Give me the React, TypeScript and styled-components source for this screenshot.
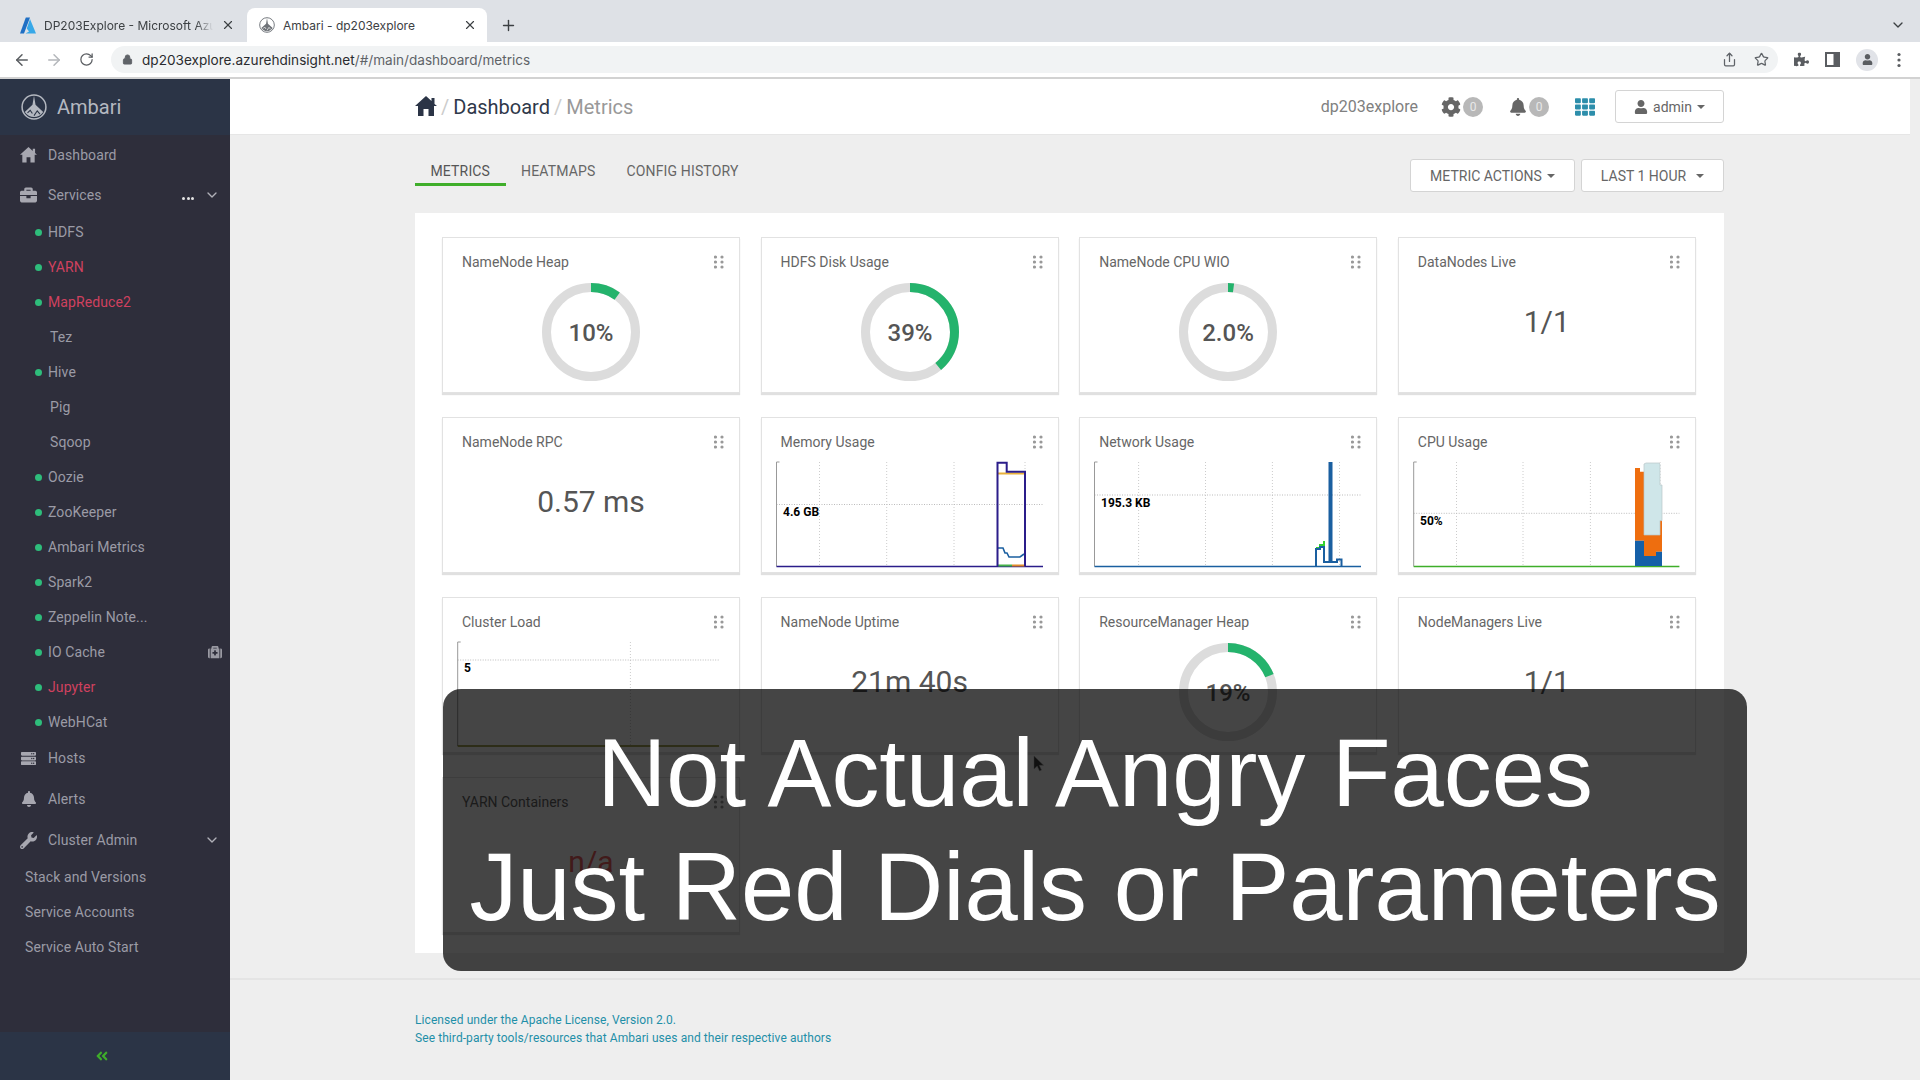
import React from "react";
import styled, { createGlobalStyle } from "styled-components";
import { ArrowLeft, ArrowRight, RotateCw, Lock, Share, Star, ChevronDown, Plus, X } from "lucide-react";
import {
  FaBriefcase, FaServer, FaBell, FaWrench, FaCog, FaUser, FaTh, FaAngleDoubleLeft, FaMedkit, FaPuzzlePiece,
} from "react-icons/fa";

const Global = createGlobalStyle`
  html, body { margin: 0; padding: 0; background: #eee; }
  * { box-sizing: border-box; }
  body { font-family: Roboto, "Liberation Sans", sans-serif; }
`;

const Page = styled.div`
  position: relative; width: 1920px; height: 1080px; overflow: hidden;
  display: flex; flex-direction: column; background: #eee;
`;

/* ---------- browser chrome ---------- */
const TabStrip = styled.div`
  height: 42px; background: #dee1e6; display: flex; align-items: flex-end;
  font-family: Inter, "Liberation Sans", sans-serif; font-size: 12px; color: #3c4043;
`;
const Tab = styled.div<{ $active?: boolean; $w: number }>`
  width: ${(p) => p.$w}px; height: 34px; display: flex; align-items: center;
  padding: 0 10px 0 ${(p) => (p.$active ? 12 : 20)}px; gap: 8px;
  border-radius: 8px 8px 0 0; background: ${(p) => (p.$active ? "#fff" : "transparent")};
  margin-right: ${(p) => (p.$active ? 0 : 2)}px;
`;
const TabTitle = styled.span<{ $fade?: boolean }>`
  flex: 1; white-space: nowrap; overflow: hidden;
  ${(p) => p.$fade && "mask-image: linear-gradient(90deg,#000 90%,transparent);"}
`;
const PlusBox = styled.div`
  width: 42px; height: 34px; display: flex; align-items: center; justify-content: center; color: #3c4043;
`;
const StripEnd = styled.div`
  margin-left: auto; width: 44px; height: 34px; display: flex; align-items: center; justify-content: center; color: #3c4043;
`;
const Toolbar = styled.div`
  height: 37px; background: #fff; border-bottom: 2px solid #d2d2d2; display: flex; align-items: center; color: #5f6368;
`;
const NavBtn = styled.div<{ $dim?: boolean }>`
  width: 32px; height: 26px; display: flex; align-items: center; justify-content: center;
  color: ${(p) => (p.$dim ? "#b4b7bb" : "#5a5d61")};
  &:first-child { margin-left: 6px; }
`;
const AddressBar = styled.div`
  width: 1667px; height: 27px; margin-left: 9px; border-radius: 14px; background: #f1f3f4;
  display: flex; align-items: center; padding: 0 0 0 11px; gap: 9px;
  font-family: Inter, "Liberation Sans", sans-serif; font-size: 13.6px; color: #5f6368;
`;
const Host = styled.span`color: #2a2b2e;`;
const UrlEnd = styled.div`margin-left: auto; display: flex; align-items: center; gap: 17px; padding-right: 9px;`;
const ToolIcons = styled.div`display: flex; align-items: center; margin-left: 16px; gap: 16px; color: #5a5d61;`;
const Avatar = styled.div`
  width: 22px; height: 22px; border-radius: 50%; background: #e1e3e8; display: flex; align-items: center; justify-content: center; color: #5a5d61;
`;
const KebabSvg = styled.svg`margin-left: 3px;`;

/* ---------- app frame ---------- */
const Body = styled.div`flex: 1; display: flex; min-height: 0;`;
const Sidebar = styled.aside`
  width: 230px; flex: none; background: #2e2e3b; display: flex; flex-direction: column; color: #9b9ba6; font-size: 14px; letter-spacing: .1px;
`;
const Brand = styled.div`
  height: 56px; background: #2b3446; display: flex; align-items: center; gap: 10px; padding-left: 21px; font-size: 20px; color: #b4b8c0; letter-spacing: 0;
`;
const NavItem = styled.div<{ $h: number }>`
  height: ${(p) => p.$h}px; display: flex; align-items: center; padding: 0 10px 0 20px; gap: 11px;
`;
const NavIcon = styled.span`width: 17px; display: flex; justify-content: center; color: #a7a7b0;`;
const NavRight = styled.span`margin-left: auto; display: flex; align-items: center; gap: 10px; color: #b0b0b8;`;
const SubItem = styled.div<{ $red?: boolean; $x?: number }>`
  height: 35px; display: flex; align-items: center; padding-left: ${(p) => p.$x ?? 48}px; padding-right: 8px; position: relative;
  color: ${(p) => (p.$red ? "#d0415f" : "#9b9ba6")};
`;
const Dot = styled.span`
  position: absolute; left: 35px; top: 15px; width: 7px; height: 7px; border-radius: 50%; background: #2ebd7b;
`;
const SubBadge = styled.span`margin-left: auto; color: #9a9aa3; display: flex;`;
const Ellipsis = styled.span`display: flex; gap: 1.5px; position: relative; top: 4px;`;
const EllipsisDot = styled.i`width: 3px; height: 3px; background: #e4e4e4; border-radius: 50%;`;
const SideFoot = styled.div`
  margin-top: auto; height: 48px; background: #2b3446; display: flex; align-items: center; padding-left: 95px; color: #3fae2a;
`;
const Main = styled.main`flex: 1; min-width: 0; display: flex; flex-direction: column;`;
const Header = styled.header`
  height: 56px; margin-right: 10px; background: #fff; border-bottom: 1px solid #e6e6e6;
  display: flex; align-items: center; padding: 0 186px 0 185px;
`;
const Crumbs = styled.div`display: flex; align-items: center; font-size: 20px; color: #2f384a; gap: 4px;`;
const Slash = styled.span`color: #ccc;`;
const Muted = styled.span`color: #999;`;
const HeadRight = styled.div`margin-left: auto; display: flex; align-items: center;`;
const ClusterName = styled.span`font-size: 16px; color: #808080; margin-right: 23px;`;
const Alert = styled.div`display: flex; align-items: center; color: #666; gap: 2px; margin-right: 26px;`;
const Count = styled.span`
  width: 20px; height: 20px; border-radius: 50%; background: #b8b8b8; color: #e8e8e8; font-size: 12px;
  display: flex; align-items: center; justify-content: center;
`;
const Grid9 = styled.span`display: flex; color: #2d8eab; margin-right: 20px;`;
const Btn = styled.div<{ $w: number }>`
  width: ${(p) => p.$w}px; height: 33px; background: #fff; border: 1px solid #d4d4d4; border-radius: 3px;
  display: flex; align-items: center; justify-content: center; color: #666; font-size: 14px; gap: 5px;
`;
const Caret = styled.i<{ $gap?: number }>`
  width: 0; height: 0; border-left: 4px solid transparent; border-right: 4px solid transparent; border-top: 4px solid #666;
  margin-left: ${(p) => p.$gap ?? 0}px;
`;
const Bar = styled.div`
  display: flex; align-items: flex-start; justify-content: space-between; padding: 24px 196px 0 185px; height: 78px; flex: none;
`;
const Tabs = styled.div`display: flex;`;
const TabLink = styled.div<{ $active?: boolean }>`
  height: 27px; padding: 0 15.5px; line-height: 24px; font-size: 14px; letter-spacing: .15px; color: ${(p) => (p.$active ? "#555" : "#666")};
  border-bottom: 3px solid ${(p) => (p.$active ? "#3fae2a" : "transparent")};
`;
const Actions = styled.div`display: flex; gap: 6px;`;
const Panel = styled.section`
  width: 1309px; height: 740px; flex: none; margin-left: 185px; background: #fff; padding: 24px 0 0 27px;
`;
const CardGrid = styled.div`
  display: grid; grid-template-columns: repeat(4, 298px); grid-auto-rows: 156px; gap: 24px 20.6px;
`;
const Card = styled.div`
  border: 1px solid #e2e2e2; background: #fff; box-shadow: 0 2px 1px rgba(0,0,0,.12);
`;
const CardHead = styled.div`
  height: 36px; padding: 12px 15px 0 19px; display: flex; align-items: center; justify-content: space-between; font-size: 14px; color: #666;
  line-height: 24px;
`;
const Handle = styled.svg`display: block; flex: none;`;
const GaugeBox = styled.div`display: flex; justify-content: center; margin-top: 8px;`;
const GaugeText = styled.text`font-family: Roboto, sans-serif; font-size: 24px; font-weight: 500; fill: #555;`;
const Value = styled.div<{ $red?: boolean }>`
  margin-top: 28px; height: 40px; line-height: 40px; text-align: center; font-size: 30px;
  color: ${(p) => (p.$red ? "#ef6162" : "#555")};
`;
const ChartSvg = styled.svg`display: block; margin-top: 4px;`;
const ChartLabel = styled.text`font-family: Roboto, sans-serif; font-size: 12px; font-weight: 700; fill: #000;`;
const Foot = styled.footer`
  margin-top: 25px; flex: 1; border-top: 2px solid #e4e4e4; padding: 31px 0 0 185px; font-size: 12px; line-height: 18px; color: #1f8fa8; letter-spacing: .08px;
`;
const Caption = styled.div`
  position: absolute; left: 443px; top: 689px; width: 1304px; height: 282px; border-radius: 18px;
  background: rgba(0,0,0,.73); display: flex; flex-direction: column; align-items: center; justify-content: center;
  color: #fff; font-family: "Liberation Sans", Arial, sans-serif; font-size: 95.8px; line-height: 114px; white-space: nowrap;
`;
const Cursor = styled.svg`position: absolute; left: 1033px; top: 755px;`;

/* ---------- drawn parts ---------- */
const HandleDots = () => (
  <Handle width="10" height="14" viewBox="0 0 10 14" fill="#999">
    {[2, 7, 12].map((y) => [1.5, 8].map((x) => <circle key={`${x}${y}`} cx={x} cy={y} r="1.6" />))}
  </Handle>
);

const HomeGlyph = ({ size, color }: { size: number; color: string }) => (
  <svg width={size} height={size * 0.92} viewBox="0 0 22 20" fill={color}>
    <path d="M11 0L16.5 5V2H19.5V7.8L22 10H19V20H13.5V13H8.5V20H3V10H0Z" />
  </svg>
);

const Gauge = ({ pct, label }: { pct: number; label: string }) => {
  const r = 44.5;
  const c = 2 * Math.PI * r;
  return (
    <GaugeBox>
      <svg width="100" height="100" viewBox="0 0 100 100">
        <circle cx="50" cy="50" r={r} fill="none" stroke="#dcdcdc" strokeWidth="9" />
        <circle cx="50" cy="50" r={r} fill="none" stroke="#24b36c" strokeWidth="9"
          strokeDasharray={`${(c * pct) / 100} ${c}`} transform="rotate(-90 50 50)" />
        <GaugeText x="50" y="58.5" textAnchor="middle">{label}</GaugeText>
      </svg>
    </GaugeBox>
  );
};

const Axes = ({ x0, x1, y0, y1, hy, grid, line = "#1a5fa0" }: { x0: number; x1: number; y0: number; y1: number; hy: number; grid: number[]; line?: string }) => (
  <>
    {grid.map((x) => <line key={x} x1={x} x2={x} y1={y0} y2={y1} stroke="#ccc" strokeDasharray="1 2" />)}
    <line x1={x0} x2={x1} y1={hy} y2={hy} stroke="#bbb" strokeDasharray="1 1.5" />
    <path d={`M${x0 + 3} ${y0}H${x0}V${y1}`} fill="none" stroke="#999" />
    <line x1={x0} x2={x1} y1={y1} y2={y1} stroke={line} strokeWidth="1.6" />
  </>
);

const MemoryChart = () => (
  <ChartSvg width="296" height="115" viewBox="762 458 296 115">
    <Axes x0={776.5} x1={1043} y0={462} y1={566.5} hy={504.5} grid={[819.5, 886.7, 954, 1025]} line="#2b1d8a" />
    <ChartLabel x="783" y="516">4.6 GB</ChartLabel>
    <line x1="998" x2="1025" y1="473.5" y2="473.5" stroke="#e8b13a" strokeWidth="2" />
    <line x1="998" x2="1012" y1="565.5" y2="565.5" stroke="#45b24a" strokeWidth="2" />
    <line x1="1012" x2="1025" y1="565.5" y2="565.5" stroke="#e08a2a" strokeWidth="2" />
    <path d="M998 548H1003L1005 553H1007L1009 557H1020L1024 554" fill="none" stroke="#1a5fa0" strokeWidth="1.6" />
    <path d="M997.5 566.5V462.7H1006.7V471.7H1025V566.5" fill="none" stroke="#2b1d8a" strokeWidth="2" />
  </ChartSvg>
);

const NetworkChart = () => (
  <ChartSvg width="296" height="115" viewBox="1080 458 296 115">
    <Axes x0={1094.5} x1={1361} y0={462} y1={566.5} hy={495} grid={[1138.6, 1205.5, 1272.4, 1339.5]} />
    <ChartLabel x="1101" y="506.5">195.3 KB</ChartLabel>
    <path d="M1316 548H1320V545H1324V541" fill="none" stroke="#35d030" strokeWidth="2" />
    <path d="M1316 566.5V549H1320V547H1324V562H1329M1332 562H1337V559.5H1341.5V566.5" fill="none" stroke="#1a5fa0" strokeWidth="2" />
    <rect x="1328.5" y="462" width="4" height="101" fill="#1a5fa0" />
  </ChartSvg>
);

const CpuChart = () => (
  <ChartSvg width="296" height="115" viewBox="1399 458 296 115">
    <Axes x0={1413.7} x1={1679.4} y0={462} y1={566.5} hy={513.3} grid={[1456.5, 1523, 1590.4, 1660]} line="#3fae2a" />
    <ChartLabel x="1420" y="525">50%</ChartLabel>
    <path d="M1635 468H1640V471.7H1644V535H1660V520.6H1662V551.7H1656V556H1644V540.7H1635Z" fill="#ee6e0f" />
    <path d="M1635 540.7H1644V556H1656V551.7H1662V566H1635Z" fill="#1560a8" />
    <path d="M1644 464L1646 463H1659L1660 464V485H1662V520.6H1660V535H1644Z" fill="#cfe6e9" stroke="#b9c6c8" strokeWidth=".7" />
  </ChartSvg>
);

const LoadChart = () => (
  <ChartSvg width="296" height="115" viewBox="443 638 296 115">
    <Axes x0={457.7} x1={719} y0={642} y1={746} hy={660} grid={[630.4]} line="#8a8a20" />
    <ChartLabel x="464" y="672">5</ChartLabel>
  </ChartSvg>
);

const Widget = ({ title, children }: { title: string; children?: React.ReactNode }) => (
  <Card>
    <CardHead>{title}<HandleDots /></CardHead>
    {children}
  </Card>
);

const AzureLogo = () => (
  <svg width="16" height="17" viewBox="0 0 16 17">
    <path d="M5.8 0.5H10L4 16.5H0Z" fill="#1f6fc4" />
    <path d="M10 2L16 16.5H5.5L9 14.5L6.8 11.5Z" fill="#37a8e8" />
  </svg>
);

const AmbariLogo = ({ size, ring, bg }: { size: number; ring: string; bg: string }) => (
  <svg width={size} height={size} viewBox="0 0 24 24">
    <circle cx="12" cy="12" r="11" fill="none" stroke={ring} strokeWidth="1.4" />
    <path d="M12 1.5L13.4 10L20.5 16.5A10 10 0 0 1 3.5 16.5L10.6 10Z" fill={ring} />
    <path d="M6 17.5L8.5 15L10.5 18M12 20L15 15.5L17.5 18.5" fill="none" stroke={bg} strokeWidth="1" />
  </svg>
);

const SidePanelIcon = () => (
  <svg width="15" height="15" viewBox="0 0 15 15">
    <rect x="1" y="1" width="13" height="13" fill="#fff" stroke="#5a5d61" strokeWidth="2" />
    <rect x="8.5" y="1" width="5.5" height="13" fill="#5a5d61" />
  </svg>
);

const Kebab = () => (
  <KebabSvg width="4" height="16" viewBox="0 0 4 16" fill="#5a5d61">
    <circle cx="2" cy="2.5" r="1.6" /><circle cx="2" cy="8" r="1.6" /><circle cx="2" cy="13.5" r="1.6" />
  </KebabSvg>
);

type Svc = { n: string; dot?: boolean; red?: boolean; badge?: boolean; x?: number };
const services: Svc[] = [
  { n: "HDFS", dot: true }, { n: "YARN", dot: true, red: true }, { n: "MapReduce2", dot: true, red: true },
  { n: "Tez", x: 50 }, { n: "Hive", dot: true }, { n: "Pig", x: 50 }, { n: "Sqoop", x: 50 },
  { n: "Oozie", dot: true }, { n: "ZooKeeper", dot: true }, { n: "Ambari Metrics", dot: true }, { n: "Spark2", dot: true },
  { n: "Zeppelin Note...", dot: true }, { n: "IO Cache", dot: true, badge: true }, { n: "Jupyter", dot: true, red: true }, { n: "WebHCat", dot: true },
];

export default function App() {
  return (
    <Page>
      <Global />
      <TabStrip>
        <Tab $w={245}><AzureLogo /><TabTitle $fade>DP203Explore - Microsoft Azu</TabTitle><X size={14} /></Tab>
        <Tab $active $w={240}><AmbariLogo size={16} ring="#6f7378" bg="#fff" /><TabTitle>Ambari - dp203explore</TabTitle><X size={14} /></Tab>
        <PlusBox><Plus size={17} /></PlusBox>
        <StripEnd><ChevronDown size={16} /></StripEnd>
      </TabStrip>
      <Toolbar>
        <NavBtn><ArrowLeft size={18} /></NavBtn>
        <NavBtn $dim><ArrowRight size={18} /></NavBtn>
        <NavBtn><RotateCw size={15} /></NavBtn>
        <AddressBar>
          <Lock size={11} fill="#5f6368" />
          <span><Host>dp203explore.azurehdinsight.net</Host>/#/main/dashboard/metrics</span>
          <UrlEnd><Share size={15} /><Star size={15} /></UrlEnd>
        </AddressBar>
        <ToolIcons>
          <FaPuzzlePiece size={15} />
          <SidePanelIcon />
          <Avatar><FaUser size={11} /></Avatar>
          <Kebab />
        </ToolIcons>
      </Toolbar>
      <Body>
        <Sidebar>
          <Brand><AmbariLogo size={26} ring="#b4b8c0" bg="#2b3446" />Ambari</Brand>
          <NavItem $h={40}><NavIcon><HomeGlyph size={17} color="#a7a7b0" /></NavIcon>Dashboard</NavItem>
          <NavItem $h={39}><NavIcon><FaBriefcase size={18} /></NavIcon>Services
            <NavRight><Ellipsis><EllipsisDot /><EllipsisDot /><EllipsisDot /></Ellipsis><ChevronDown size={16} /></NavRight>
          </NavItem>
          {services.map((s) => (
            <SubItem key={s.n} $red={s.red} $x={s.x}>
              {s.dot && <Dot />}{s.n}
              {s.badge && <SubBadge><FaMedkit size={14} /></SubBadge>}
            </SubItem>
          ))}
          <NavItem $h={38}><NavIcon><FaServer size={15} /></NavIcon>Hosts</NavItem>
          <NavItem $h={44}><NavIcon><FaBell size={16} /></NavIcon>Alerts</NavItem>
          <NavItem $h={38}><NavIcon><FaWrench size={17} /></NavIcon>Cluster Admin
            <NavRight><ChevronDown size={16} /></NavRight>
          </NavItem>
          <SubItem $x={25}>Stack and Versions</SubItem>
          <SubItem $x={25}>Service Accounts</SubItem>
          <SubItem $x={25}>Service Auto Start</SubItem>
          <SideFoot><FaAngleDoubleLeft size={14} /></SideFoot>
        </Sidebar>
        <Main>
          <Header>
            <Crumbs><HomeGlyph size={22} color="#2b3446" /><Slash>/</Slash>Dashboard<Slash>/</Slash><Muted>Metrics</Muted></Crumbs>
            <HeadRight>
              <ClusterName>dp203explore</ClusterName>
              <Alert><FaCog size={20} /><Count>0</Count></Alert>
              <Alert><FaBell size={18} /><Count>0</Count></Alert>
              <Grid9><FaTh size={20} /></Grid9>
              <Btn $w={109}><FaUser size={14} />admin<Caret /></Btn>
            </HeadRight>
          </Header>
          <Bar>
            <Tabs>
              <TabLink $active>METRICS</TabLink>
              <TabLink>HEATMAPS</TabLink>
              <TabLink>CONFIG HISTORY</TabLink>
            </Tabs>
            <Actions>
              <Btn $w={165}>METRIC ACTIONS<Caret /></Btn>
              <Btn $w={143}>LAST 1 HOUR<Caret $gap={5} /></Btn>
            </Actions>
          </Bar>
          <Panel>
            <CardGrid>
              <Widget title="NameNode Heap"><Gauge pct={10} label="10%" /></Widget>
              <Widget title="HDFS Disk Usage"><Gauge pct={39} label="39%" /></Widget>
              <Widget title="NameNode CPU WIO"><Gauge pct={2} label="2.0%" /></Widget>
              <Widget title="DataNodes Live"><Value>1/1</Value></Widget>
              <Widget title="NameNode RPC"><Value>0.57 ms</Value></Widget>
              <Widget title="Memory Usage"><MemoryChart /></Widget>
              <Widget title="Network Usage"><NetworkChart /></Widget>
              <Widget title="CPU Usage"><CpuChart /></Widget>
              <Widget title="Cluster Load"><LoadChart /></Widget>
              <Widget title="NameNode Uptime"><Value>21m 40s</Value></Widget>
              <Widget title="ResourceManager Heap"><Gauge pct={19} label="19%" /></Widget>
              <Widget title="NodeManagers Live"><Value>1/1</Value></Widget>
              <Widget title="YARN Containers"><Value $red>n/a</Value></Widget>
            </CardGrid>
          </Panel>
          <Foot>
            <div>Licensed under the Apache License, Version 2.0.</div>
            <div>See third-party tools/resources that Ambari uses and their respective authors</div>
          </Foot>
        </Main>
      </Body>
      <Caption>
        <div>Not Actual Angry Faces</div>
        <div>Just Red Dials or Parameters</div>
      </Caption>
      <Cursor width="12" height="18" viewBox="0 0 12 18">
        <path d="M1 1V14L4.2 11L6.5 16L8.5 15L6.2 10.3H10.5Z" fill="#111" stroke="#333" strokeWidth=".5" />
      </Cursor>
    </Page>
  );
}
